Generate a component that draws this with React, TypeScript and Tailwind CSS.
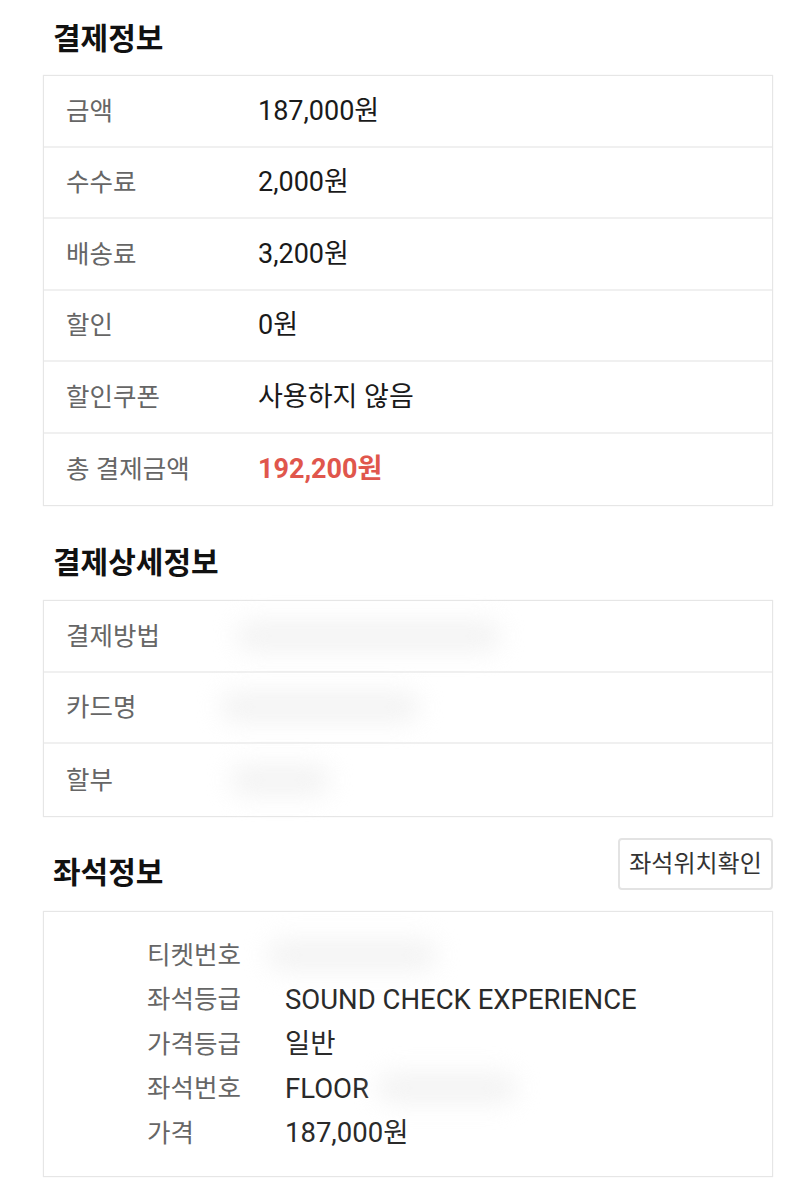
import React from 'react'

const FONT = 'font-[Roboto,"Noto_Sans_CJK_KR",sans-serif]'

const payRows = [
  { label: '금액', value: '187,000원' },
  { label: '수수료', value: '2,000원' },
  { label: '배송료', value: '3,200원' },
  { label: '할인', value: '0원' },
  { label: '할인쿠폰', value: '사용하지 않음' },
]

// blurred placeholders for hidden values
function Blur({ w }: { w: string }) {
  return <div className={`h-[30px] ${w} rounded-full bg-[#eeeeee] blur-md opacity-70`} />
}

function Row({ label, children, last }: { label: string; children: React.ReactNode; last?: boolean }) {
  return (
    <div className={`flex items-center h-[71.5px] ${last ? '' : 'border-b-2 border-[#f0f0f0]'}`}>
      <div className="w-[214px] pl-[22px] text-[25.5px] text-[#666666]">{label}</div>
      <div className="flex-1 text-[27px] text-[#1a1a1a]">{children}</div>
    </div>
  )
}

function Box({ children }: { children: React.ReactNode }) {
  return <div className="border border-[#e6e6e6] shadow-[0_0_1px_#e6e6e6] bg-white">{children}</div>
}

const seatRows: { label: string; value?: string; blur?: string }[] = [
  { label: '티켓번호', blur: 'w-[170px]' },
  { label: '좌석등급', value: 'SOUND CHECK EXPERIENCE' },
  { label: '가격등급', value: '일반' },
  { label: '좌석번호', value: 'FLOOR', blur: 'w-[140px]' },
  { label: '가격', value: '187,000원' },
]

export default function App() {
  return (
    <div className={`${FONT} bg-white w-[807px] min-h-[1200px] pl-[43px] pr-[34px]`}>
      {/* 결제정보 */}
      <div className="h-[75px] flex items-center pt-[3px] pl-[10px]">
        <h2 className="text-[30px] font-bold text-[#111111] leading-[40px]">결제정보</h2>
      </div>
      <Box>
        {payRows.map(r => (
          <Row key={r.label} label={r.label}>{r.value}</Row>
        ))}
        <Row label="총 결제금액" last>
          <span className="font-bold text-[#e0564c]">192,200원</span>
        </Row>
      </Box>

      {/* 결제상세정보 */}
      <div className="h-[94px] flex items-center pt-[20px] pl-[10px]">
        <h2 className="text-[30px] font-bold text-[#111111] leading-[40px]">결제상세정보</h2>
      </div>
      <Box>
        <Row label="결제방법"><div className="-ml-[22px]"><Blur w="w-[265px]" /></div></Row>
        <Row label="카드명"><div className="-ml-[38px]"><Blur w="w-[200px]" /></div></Row>
        <Row label="할부" last><div className="-ml-[28px]"><Blur w="w-[100px]" /></div></Row>
      </Box>

      {/* 좌석정보 */}
      <div className="h-[94px] flex justify-between items-start pt-[21px] pl-[10px]">
        <h2 className="mt-[15px] text-[30px] font-bold text-[#111111] leading-[40px]">좌석정보</h2>
        <button className="h-[52px] w-[155px] border-2 border-[#e3e3e3] rounded-[4px] bg-white text-[24px] text-[#333333]">
          좌석위치확인
        </button>
      </div>
      <Box>
        <div className="py-[21px]">
          {seatRows.map(r => (
            <div key={r.label} className="flex items-center h-[44.5px]">
              <div className="w-[241px] pl-[103px] text-[25.5px] text-[#666666]">{r.label}</div>
              <div className="flex items-center text-[27.5px] text-[#2a2a2a]">
                {r.value && <span>{r.value}</span>}
                {r.blur && <div className={r.value ? 'ml-2' : '-ml-[18px]'}><Blur w={r.blur} /></div>}
              </div>
            </div>
          ))}
        </div>
      </Box>
    </div>
  )
}
